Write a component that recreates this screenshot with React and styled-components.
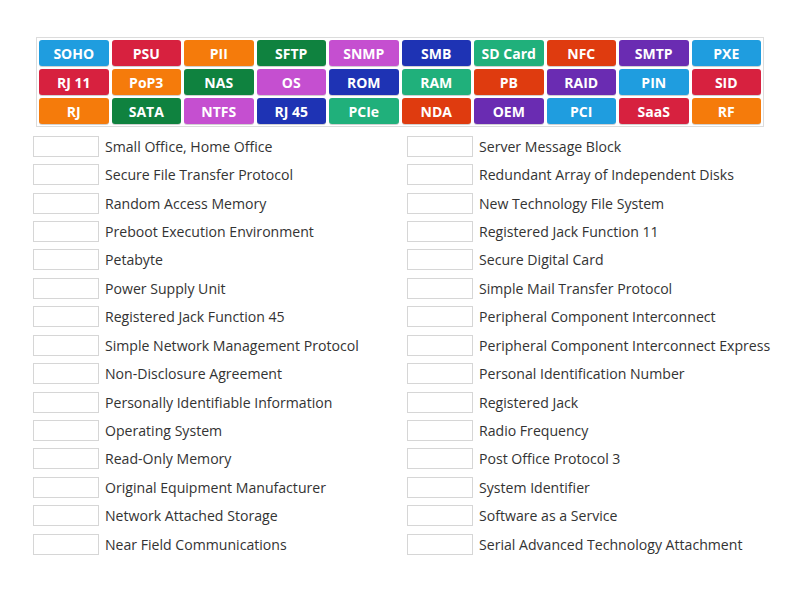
import React from "react";
import styled, { createGlobalStyle } from "styled-components";

const colors = {
  sky: "#1f9ddf",
  red: "#d7213f",
  orange: "#f57b0b",
  green: "#0f823f",
  orchid: "#c54fd0",
  navy: "#1e33b4",
  teal: "#20b07b",
  ember: "#df3b0f",
  purple: "#6a2cb2",
};

const tiles = [
  ["SOHO", "sky"], ["PSU", "red"], ["PII", "orange"], ["SFTP", "green"], ["SNMP", "orchid"],
  ["SMB", "navy"], ["SD Card", "teal"], ["NFC", "ember"], ["SMTP", "purple"], ["PXE", "sky"],
  ["RJ 11", "red"], ["PoP3", "orange"], ["NAS", "green"], ["OS", "orchid"], ["ROM", "navy"],
  ["RAM", "teal"], ["PB", "ember"], ["RAID", "purple"], ["PIN", "sky"], ["SID", "red"],
  ["RJ", "orange"], ["SATA", "green"], ["NTFS", "orchid"], ["RJ 45", "navy"], ["PCIe", "teal"],
  ["NDA", "ember"], ["OEM", "purple"], ["PCI", "sky"], ["SaaS", "red"], ["RF", "orange"],
];

const left = [
  "Small Office, Home Office",
  "Secure File Transfer Protocol",
  "Random Access Memory",
  "Preboot Execution Environment",
  "Petabyte",
  "Power Supply Unit",
  "Registered Jack Function 45",
  "Simple Network Management Protocol",
  "Non-Disclosure Agreement",
  "Personally Identifiable Information",
  "Operating System",
  "Read-Only Memory",
  "Original Equipment Manufacturer",
  "Network Attached Storage",
  "Near Field Communications",
];

const right = [
  "Server Message Block",
  "Redundant Array of Independent Disks",
  "New Technology File System",
  "Registered Jack Function 11",
  "Secure Digital Card",
  "Simple Mail Transfer Protocol",
  "Peripheral Component Interconnect",
  "Peripheral Component Interconnect Express",
  "Personal Identification Number",
  "Registered Jack",
  "Radio Frequency",
  "Post Office Protocol 3",
  "System Identifier",
  "Software as a Service",
  "Serial Advanced Technology Attachment",
];

const GlobalStyle = createGlobalStyle`
  body {
    margin: 0;
    background: #fff;
    font-family: "Open Sans", "Liberation Sans", sans-serif;
  }
`;

const Page = styled.div`
  width: 800px;
  height: 600px;
  padding: 37px 0 0 33px;
  box-sizing: border-box;
`;

const TilePanel = styled.div`
  margin-left: 3px;
  width: 728px;
  box-sizing: border-box;
  border: 1px solid #dcdcdc;
  padding: 2px;
  display: grid;
  grid-template-columns: repeat(10, 1fr);
  gap: 3px;
`;

const Tile = styled.div`
  height: 26px;
  border-radius: 3px;
  background: ${(p) => colors[p.$color]};
  color: #fff;
  font-weight: 700;
  font-size: 14px;
  display: flex;
  align-items: center;
  justify-content: center;
  box-shadow: 0 1px 0 rgba(0, 0, 0, 0.18);
`;

const Columns = styled.div`
  margin-top: 5px;
  display: grid;
  grid-template-columns: 374px 374px;
`;

const List = styled.div`
  display: grid;
  grid-auto-rows: 28.43px;
`;

const Row = styled.div`
  display: flex;
  align-items: center;
  gap: 6px;
`;

const Slot = styled.div`
  width: 66px;
  height: 21px;
  box-sizing: border-box;
  border: 1px solid #d6d6d6;
  background: #fff;
  flex: none;
`;

const Label = styled.span`
  font-size: 14.1px;
  color: #333;
  white-space: nowrap;
`;

export default function App() {
  return (
    <Page>
      <GlobalStyle />
      <TilePanel>
        {tiles.map(([t, c]) => (
          <Tile key={t} $color={c}>{t}</Tile>
        ))}
      </TilePanel>
      <Columns>
        {[left, right].map((items, i) => (
          <List key={i}>
            {items.map((txt) => (
              <Row key={txt}>
                <Slot />
                <Label>{txt}</Label>
              </Row>
            ))}
          </List>
        ))}
      </Columns>
    </Page>
  );
}
